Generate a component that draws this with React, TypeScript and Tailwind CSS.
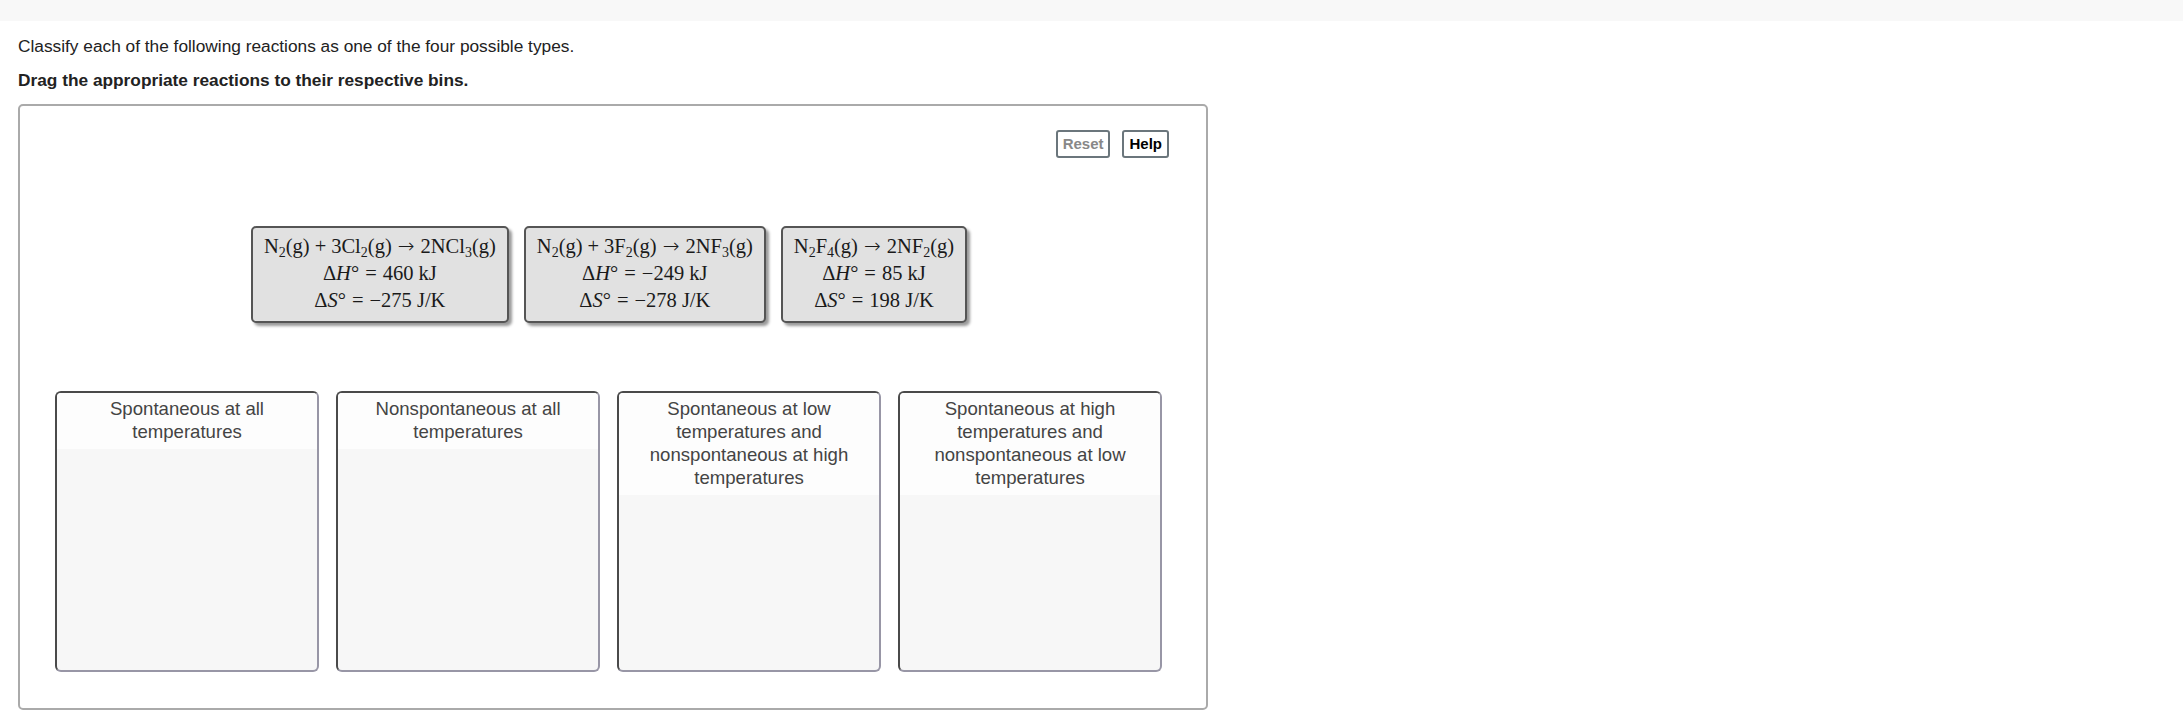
import type { ReactNode } from "react";

interface Reaction {
  id: string;
  equation: ReactNode;
  dH: string;
  dS: string;
}

// binary / relation operators with math-style spacing
const Plus = () => <span className="mx-[5px]">+</span>;
const Arrow = () => (
  <span className="mx-[6px] font-['DejaVu_Sans',sans-serif] text-[20px] font-light">→</span>
);
const Eq = () => <span className="mx-[6px]">=</span>;

const reactions: Reaction[] = [
  {
    id: "ncl3",
    equation: (
      <>
        N<sub>2</sub>(g)
        <Plus />
        3Cl<sub>2</sub>(g)
        <Arrow />
        2NCl<sub>3</sub>(g)
      </>
    ),
    dH: "460",
    dS: "−275",
  },
  {
    id: "nf3",
    equation: (
      <>
        N<sub>2</sub>(g)
        <Plus />
        3F<sub>2</sub>(g)
        <Arrow />
        2NF<sub>3</sub>(g)
      </>
    ),
    dH: "−249",
    dS: "−278",
  },
  {
    id: "nf2",
    equation: (
      <>
        N<sub>2</sub>F<sub>4</sub>(g)
        <Arrow />
        2NF<sub>2</sub>(g)
      </>
    ),
    dH: "85",
    dS: "198",
  },
];

const bins = [
  "Spontaneous at all temperatures",
  "Nonspontaneous at all temperatures",
  "Spontaneous at low temperatures and nonspontaneous at high temperatures",
  "Spontaneous at high temperatures and nonspontaneous at low temperatures",
];

function ReactionCard({ r }: { r: Reaction }) {
  return (
    <div className="rounded-[5px] border-2 border-[#555] bg-[#e1e1e1] px-[11px] pt-[5px] pb-[7px] text-center font-['Liberation_Serif',serif] text-[20.5px] leading-[27px] text-[#1a1a1a] shadow-[3px_3px_3px_rgba(0,0,0,0.4)] [&_sub]:text-[14px] [&_sub]:leading-none">
      <div className="whitespace-nowrap">{r.equation}</div>
      <div className="whitespace-nowrap">
        Δ<i>H</i>°<Eq />
        {r.dH} kJ
      </div>
      <div className="whitespace-nowrap">
        Δ<i>S</i>°<Eq />
        {r.dS} J/K
      </div>
    </div>
  );
}

function Bin({ label }: { label: string }) {
  return (
    <div className="flex h-[281px] w-[264px] flex-col overflow-hidden rounded-[6px] border-2 border-[#4a4a4a] border-r-[#9896a6] border-b-[#9896a6] bg-[#f7f7f7]">
      <div className="bg-[#fdfdfd] px-4 pt-[4px] pb-[6px] text-center text-[18.6px] leading-[23px] text-[#444]">
        {label}
      </div>
    </div>
  );
}

export default function App() {
  return (
    <div className="min-h-screen bg-white font-['Liberation_Sans',Arial,sans-serif] text-[#222]">
      <div className="h-[21px] bg-[#f8f8f8]" />
      <div className="px-[18px]">
        <p className="mt-[14px] text-[17.3px] leading-[22px]">
          Classify each of the following reactions as one of the four possible types.
        </p>
        <p className="mt-[12px] text-[17.3px] font-bold leading-[22px]">
          Drag the appropriate reactions to their respective bins.
        </p>

        <div className="mt-[13px] w-[1190px] rounded-[5px] border-2 border-[#aaa] pb-[36px]">
          <div className="flex justify-end gap-[12px] pt-[24px] pr-[37px]">
            <button className="h-[28px] rounded-[3px] border-2 border-[#6b767c] px-[5px] text-[15px] font-bold text-[#888]">
              Reset
            </button>
            <button className="h-[28px] rounded-[3px] border-2 border-[#6b767c] px-[5px] text-[15px] font-bold text-black">
              Help
            </button>
          </div>

          <div className="mt-[68px] flex justify-center gap-[15px] pr-[8px]">
            {reactions.map((r) => (
              <ReactionCard key={r.id} r={r} />
            ))}
          </div>

          <div className="mt-[68px] flex gap-[17px] pl-[35px]">
            {bins.map((b) => (
              <Bin key={b} label={b} />
            ))}
          </div>
        </div>
      </div>
    </div>
  );
}
